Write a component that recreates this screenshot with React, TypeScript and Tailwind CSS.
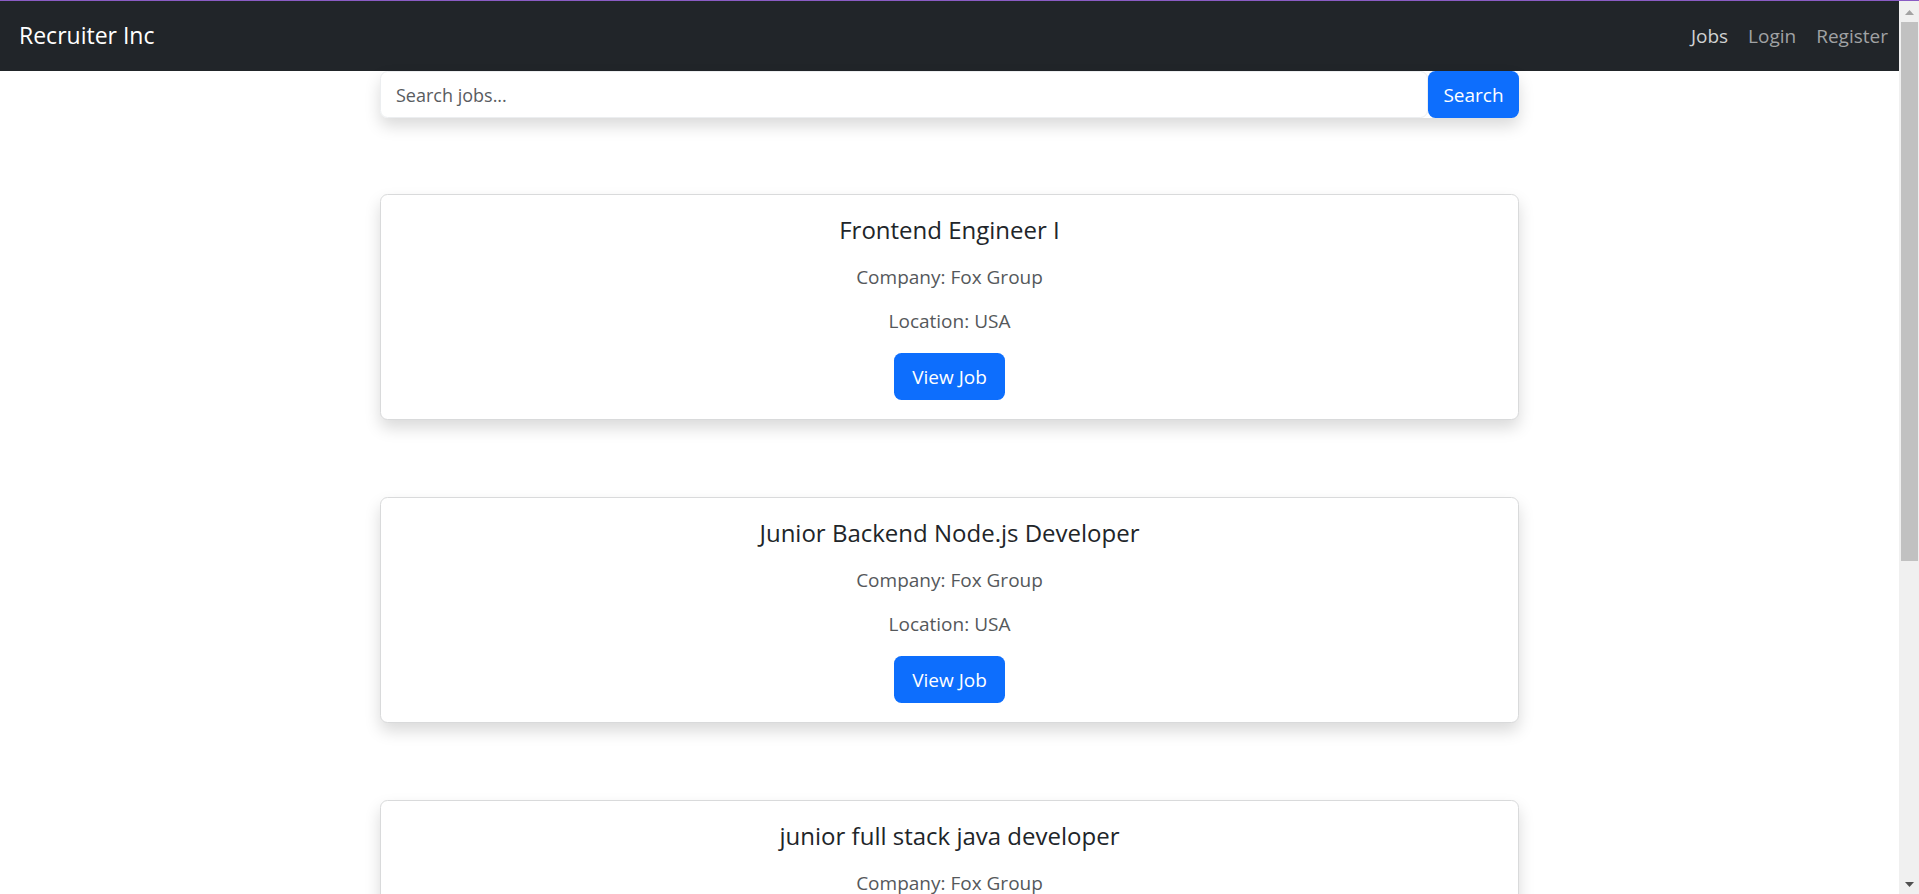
import React from 'react'

const jobs = [
  { title: 'Frontend Engineer I', company: 'Fox Group', location: 'USA' },
  { title: 'Junior Backend Node.js Developer', company: 'Fox Group', location: 'USA' },
  { title: 'junior full stack java developer', company: 'Fox Group', location: 'USA' },
]

function Navbar() {
  return (
    <nav className="h-[70px] bg-[#212529] flex items-center justify-between pl-[19px] pr-[1px]">
      <a className="text-[23px] leading-[37.5px] text-white">Recruiter Inc</a>
      <ul className="flex items-center text-[19px] leading-[30px]">
        <li className="px-[10px] text-[#d0d1d2]">Jobs</li>
        <li className="px-[10px] text-[#a0a2a4]">Login</li>
        <li className="px-[10px] text-[#a0a2a4]">Register</li>
      </ul>
    </nav>
  )
}

function JobCard({ title, company, location }: { title: string; company: string; location: string }) {
  return (
    <div className="mt-[77px] first:mt-[76px] rounded-[7.5px] border border-[#d9dadb] bg-white shadow-[0_8px_16px_rgba(0,0,0,0.15)] px-5 pt-5 pb-[19px] flex flex-col items-center text-center">
      <h5 className="text-[24px] leading-[30px] text-[#212529]">{title}</h5>
      <p className="mt-[17px] text-[19px] leading-[30px] font-medium text-[#55585b]">Company: {company}</p>
      <p className="mt-[14px] text-[19px] leading-[30px] font-medium text-[#55585b]">Location: {location}</p>
      <button className="mt-[17px] w-[111px] h-[47px] rounded-[7.5px] bg-[#0d6efd] text-white text-[19px] leading-[30px]">
        View Job
      </button>
    </div>
  )
}

function Scrollbar() {
  return (
    <div className="w-[20px] bg-[#f0f0f0] flex flex-col">
      <svg width="20" height="21" viewBox="0 0 20 21" className="shrink-0">
        <path d="M6 14 L10.5 9 L15 14 Z" fill="#a3a3a3" />
      </svg>
      <div className="ml-[2px] mr-[1px] h-[539px] bg-[#c1c1c1]" />
      <div className="flex-1" />
      <svg width="20" height="14" viewBox="0 0 20 14" className="shrink-0">
        <path d="M6 2 L10.5 7 L15 2 Z" fill="#505050" />
      </svg>
    </div>
  )
}

export default function App() {
  return (
    <div className="h-[894px] overflow-hidden flex flex-col bg-white font-['Segoe_UI','Open_Sans',sans-serif]">
      <div className="h-px bg-[#8a5cc4] shrink-0" />
      <div className="flex flex-1 min-h-0">
        <div className="flex-1 min-w-0 overflow-hidden">
          <Navbar />
          <main className="w-[1139px] mx-auto">
            <div className="flex shadow-[0_8px_16px_rgba(0,0,0,0.15)] rounded-[7.5px]">
              <input
                placeholder="Search jobs..."
                className="flex-1 h-[47px] rounded-[7.5px] border border-[#eceef0] bg-white px-[15px] text-[18px] text-[#212529] placeholder:text-[#595c5f] outline-none"
              />
              <button className="w-[91px] h-[47px] rounded-[7.5px] bg-[#0d6efd] text-white text-[19px] leading-[30px]">
                Search
              </button>
            </div>
            <div>
              {jobs.map((job) => (
                <JobCard key={job.title} {...job} />
              ))}
            </div>
          </main>
        </div>
        <Scrollbar />
      </div>
    </div>
  )
}
